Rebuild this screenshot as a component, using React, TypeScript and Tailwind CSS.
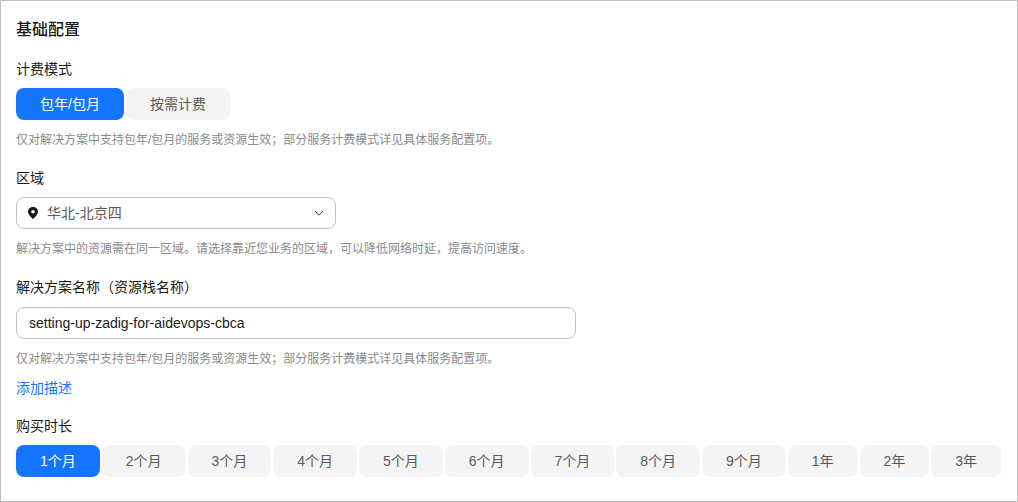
const FONT = "font-['Liberation_Sans','Noto_Sans_CJK_SC',sans-serif]";

const durations = ["1个月", "2个月", "3个月", "4个月", "5个月", "6个月", "7个月", "8个月", "9个月", "1年", "2年", "3年"];

const Hint = ({ children }: { children: string }) => (
  <p className="mt-[12px] h-[16px] text-xs leading-[16px] text-[#8a8a8a]">{children}</p>
);

const Label = ({ children }: { children: string }) => (
  <div className="h-[20px] text-sm leading-[20px] text-[#191919]">{children}</div>
);

const App = () => {
  return (
    <div className={`${FONT} h-[502px] w-[1018px] border border-[#c0c0c0] bg-white pl-[15px] pr-[16px] pt-[19px]`}>
      <h2 className="h-[20px] text-base font-medium leading-[20px] text-[#191919]">基础配置</h2>

      <div className="mt-[19px]">
        <Label>计费模式</Label>
        <div className="mt-[9px] flex gap-[2px]">
          <button className="h-[32px] rounded-lg bg-[#1476ff] px-6 text-sm text-white">包年/包月</button>
          <button className="h-[32px] rounded-lg bg-[#f4f4f4] px-6 text-sm text-[#595959]">按需计费</button>
        </div>
        <Hint>仅对解决方案中支持包年/包月的服务或资源生效；部分服务计费模式详见具体服务配置项。</Hint>
      </div>

      <div className="mt-[20px]">
        <Label>区域</Label>
        <div className="mt-[9px] flex h-[32px] w-[320px] items-center rounded-lg border border-[#c2c2c2] px-[10px]">
          <svg width="12" height="14" viewBox="0 0 12 14" className="shrink-0">
            <path
              fillRule="evenodd"
              fill="#191919"
              d="M6 1C3.2 1 1 3.1 1 5.7 1 8.4 4.2 11.4 6 13c1.8-1.6 5-4.6 5-7.3C11 3.1 8.8 1 6 1zm0 3a1.8 1.8 0 1 1 0 3.6A1.8 1.8 0 0 1 6 4z"
            />
          </svg>
          <span className="ml-[8px] flex-1 text-sm text-[#595959]">华北-北京四</span>
          <svg width="12" height="12" viewBox="0 0 12 12" className="shrink-0">
            <path d="M2 4l4 4.2L10 4" fill="none" stroke="#4a4a4a" strokeWidth="1" />
          </svg>
        </div>
        <Hint>解决方案中的资源需在同一区域。请选择靠近您业务的区域，可以降低网络时延，提高访问速度。</Hint>
      </div>

      <div className="mt-[20px]">
        <Label>解决方案名称（资源栈名称）</Label>
        <div className="mt-[10px] flex h-[32px] w-[560px] items-center rounded-lg border border-[#c2c2c2] px-3 text-sm text-[#191919]">
          setting-up-zadig-for-aidevops-cbca
        </div>
        <Hint>仅对解决方案中支持包年/包月的服务或资源生效；部分服务计费模式详见具体服务配置项。</Hint>
        <a className="mt-[12px] block h-[18px] text-sm leading-[18px] text-[#1476ff]">添加描述</a>
      </div>

      <div className="mt-[19px]">
        <Label>购买时长</Label>
        <div className="mt-[9px] flex gap-[2px]">
          {durations.map((item, index) => (
            <button
              key={item}
              className={`h-[32px] flex-auto rounded-lg text-sm ${index === 0 ? "bg-[#1476ff] text-white" : "bg-[#f4f4f4] text-[#595959]"}`}
            >
              {item}
            </button>
          ))}
        </div>
      </div>
    </div>
  );
};

export default App;
